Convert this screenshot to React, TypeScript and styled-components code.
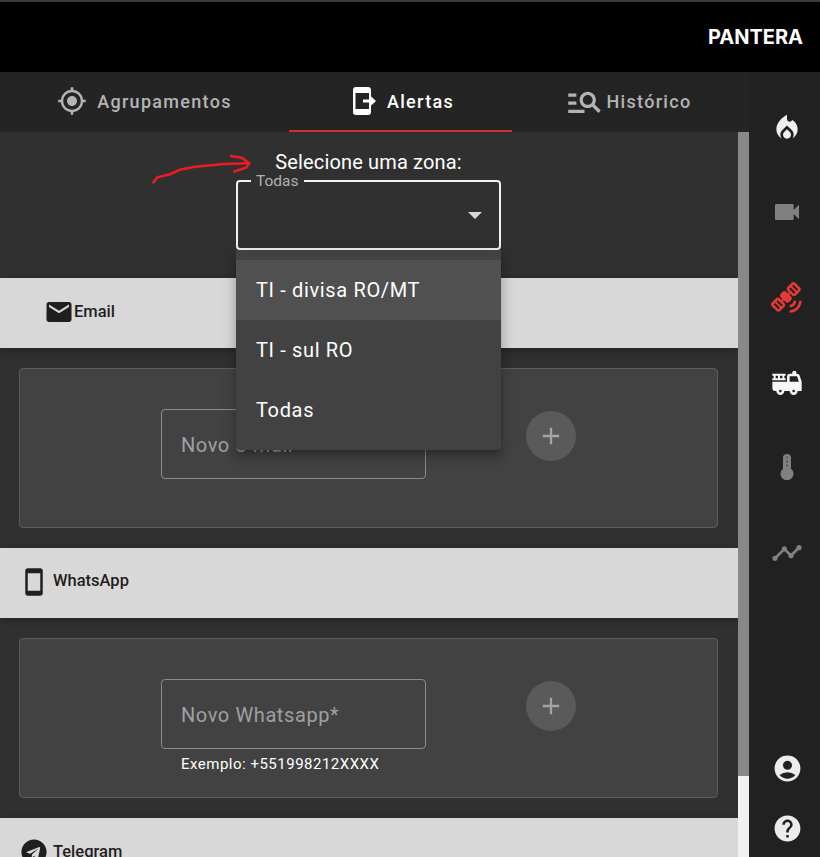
import React from 'react';
import styled, { createGlobalStyle } from 'styled-components';
import {
  MdAccountCircle,
  MdAdd,
  MdEmail,
  MdFireTruck,
  MdGpsFixed,
  MdHelp,
  MdLocalFireDepartment,
  MdManageSearch,
  MdSatelliteAlt,
  MdSmartphone,
  MdTimeline,
  MdVideocam,
} from 'react-icons/md';
import { FaTelegram } from 'react-icons/fa';

const GlobalStyle = createGlobalStyle`
  html, body {
    margin: 0;
    height: 100%;
    overflow: hidden;
    background: #303030;
    font-family: Roboto, "Liberation Sans", sans-serif;
  }
`;

const Page = styled.div`
  width: 820px;
  height: 857px;
  display: flex;
  flex-direction: column;
  overflow: hidden;
`;

const Header = styled.header`
  flex: 0 0 72px;
  box-sizing: border-box;
  background: #000;
  border-top: 2px solid #3c3c3c;
  display: flex;
  align-items: center;
  justify-content: flex-end;
  padding: 0 17px 0 0;
`;

const Logo = styled.div`
  color: #fff;
  font-family: Inter, sans-serif;
  font-weight: 700;
  font-size: 20px;
`;

const Body = styled.div`
  flex: 1;
  min-height: 0;
  display: flex;
`;

const Main = styled.div`
  width: 749px;
  display: flex;
  flex-direction: column;
`;

const Tabs = styled.nav`
  flex: 0 0 60px;
  display: flex;
  background: #242424;
`;

const Tab = styled.div<{ $width: number; $active?: boolean; $gap: number; $shift?: number }>`
  box-sizing: border-box;
  width: ${({ $width }) => $width}px;
  display: flex;
  align-items: center;
  justify-content: center;
  gap: ${({ $gap }) => $gap}px;
  padding-left: ${({ $shift }) => Math.max($shift ?? 0, 0)}px;
  padding-right: ${({ $shift }) => Math.max(-($shift ?? 0), 0)}px;
  font-size: 18px;
  font-weight: 500;
  letter-spacing: 1.3px;
  color: ${({ $active }) => ($active ? '#fff' : '#b4b4b4')};
  border-bottom: 2px solid ${({ $active }) => ($active ? '#d32f2f' : 'transparent')};
`;

const ScrollArea = styled.div`
  flex: 1;
  min-height: 0;
  display: flex;
`;

const Content = styled.main`
  position: relative;
  width: 738px;
  overflow: hidden;
  background: #303030;
`;

const ZoneSection = styled.section`
  box-sizing: border-box;
  height: 146px;
  display: flex;
  flex-direction: column;
  align-items: center;
  padding-right: 1px;
`;

const ZoneTitle = styled.div`
  margin-top: 18px;
  height: 24px;
  line-height: 24px;
  font-size: 20px;
  letter-spacing: 0.15px;
  color: #fff;
`;

const SelectBox = styled.fieldset`
  box-sizing: border-box;
  width: 265px;
  height: 76px;
  margin: 0;
  padding: 0 13px;
  border: 2px solid #f0f0f0;
  border-radius: 4px;
  position: relative;
`;

const SelectLegend = styled.legend`
  padding: 0 5px;
  font-size: 15.5px;
  line-height: 14px;
  color: #b0b0b0;
`;

const Caret = styled.span`
  position: absolute;
  right: 17px;
  top: 24px;
  width: 0;
  height: 0;
  border-left: 7px solid transparent;
  border-right: 7px solid transparent;
  border-top: 7px solid #d8d8d8;
`;

const Menu = styled.ul`
  position: absolute;
  top: 118px;
  left: 236px;
  z-index: 5;
  width: 265px;
  margin: 0;
  padding: 10px 0;
  list-style: none;
  background: #424242;
  border-radius: 0 0 4px 4px;
  box-shadow: 0 5px 5px -3px rgba(0, 0, 0, 0.2), 0 8px 10px 1px rgba(0, 0, 0, 0.14),
    0 3px 14px 2px rgba(0, 0, 0, 0.12);
`;

const MenuItem = styled.li<{ $hover?: boolean }>`
  height: 60px;
  display: flex;
  align-items: center;
  padding-left: 20px;
  font-size: 20px;
  letter-spacing: 0.65px;
  color: #fff;
  background: ${({ $hover }) => ($hover ? '#505050' : 'transparent')};
`;

const Arrow = styled.svg`
  position: absolute;
  left: 148px;
  top: 20px;
  width: 104px;
  height: 36px;
`;

const Bar = styled.div<{ $indent: number; $gap: number }>`
  position: relative;
  box-sizing: border-box;
  height: 70px;
  display: flex;
  align-items: center;
  gap: ${({ $gap }) => $gap}px;
  padding: 0 0 2px ${({ $indent }) => $indent}px;
  background: #d8d8d8;
  color: #1f1f1f;
  font-size: 16.5px;
  font-weight: 500;
  box-shadow: 0 2px 8px rgba(0, 0, 0, 0.3);
`;

const BarLabel = styled.span<{ $lift?: number }>`
  padding-bottom: ${({ $lift }) => $lift ?? 0}px;
`;

const PeekBar = styled(Bar)`
  align-items: flex-start;
  padding-top: 21px;
  height: 60px;
`;

const PeekLabel = styled.span`
  margin-top: 3px;
`;

const CardSection = styled.section`
  height: 200px;
  box-sizing: border-box;
  padding: 20px 20px 20px 19px;
`;

const Card = styled.div`
  box-sizing: border-box;
  height: 160px;
  padding-top: 40px;
  display: flex;
  justify-content: center;
  align-items: flex-start;
  gap: 100px;
  background: #424242;
  border: 1px solid #5c5c5c;
  border-radius: 4px;
`;

const Field = styled.div`
  width: 265px;
`;

const InputBox = styled.div`
  box-sizing: border-box;
  height: 70px;
  padding: 2px 19px 0;
  display: flex;
  align-items: center;
  border: 1px solid #8c8c8c;
  border-radius: 4px;
  font-size: 20px;
  letter-spacing: 0.6px;
  color: #a0a0a0;
`;

const Helper = styled.div`
  margin: 6px 0 0 20px;
  font-size: 15px;
  letter-spacing: 0.5px;
  color: #fff;
`;

const AddButton = styled.div`
  width: 50px;
  height: 50px;
  margin-top: 2px;
  border-radius: 50%;
  background: #5a5a5a;
  color: #a4a4a4;
  display: flex;
  align-items: center;
  justify-content: center;
`;

const Track = styled.div`
  width: 11px;
  background: #f1f1f1;
`;

const Thumb = styled.div`
  height: 644px;
  background: #888;
`;

const Sidebar = styled.aside`
  width: 71px;
  box-sizing: border-box;
  padding: 13px 0 0 5px;
  background: #212121;
  display: flex;
  flex-direction: column;
  align-items: center;
`;

const SideIcon = styled.div<{ $color: string; $height?: number; $lift?: number }>`
  box-sizing: border-box;
  height: ${({ $height }) => $height ?? 85}px;
  padding-bottom: ${({ $lift }) => $lift ?? 0}px;
  display: flex;
  align-items: center;
  justify-content: center;
  color: ${({ $color }) => $color};
`;

const SideBottom = styled.div`
  margin-top: auto;
  margin-bottom: -1px;
  display: flex;
  flex-direction: column;
`;

const AlertIcon = () => (
  <svg width="28" height="30" viewBox="0 0 28 30">
    <rect x="3" y="1" width="18" height="28" rx="3" fill="#fff" />
    <rect x="5.500" y="7" width="13.500" height="16" fill="#242424" />
    <rect x="13" y="13.500" width="9" height="3" fill="#fff" />
    <path d="M20 9.500l6 5.500-6 5.500z" fill="#fff" />
  </svg>
);

const ThermoIcon = () => (
  <svg width="30" height="30" viewBox="0 0 30 30">
    <path d="M11 5a4 4 0 0 1 8 0v10.700a6.500 6.500 0 1 1-8 0z" fill="#808080" />
    <path d="M15 3.500v2M15 7.500v2M15 11.500v2" stroke="#3a3a3a" strokeWidth="1.200" />
  </svg>
);

const ArrowMark = () => (
  <Arrow viewBox="0 0 104 36">
    <path
      d="M4.700 31.300L9.300 25.300L22 22.300L32 17.700L45.300 15L75.300 12L100.300 11.300"
      fill="none"
      stroke="#ed1c24"
      strokeWidth="2.600"
    />
    <path
      d="M82 4L93.700 5.700L101.300 11.300L98 15.700L85.300 19.700"
      fill="none"
      stroke="#ed1c24"
      strokeWidth="2.600"
    />
  </Arrow>
);

export default function App() {
  return (
    <Page>
      <GlobalStyle />
      <Header>
        <Logo>PANTERA</Logo>
      </Header>
      <Body>
        <Main>
          <Tabs>
            <Tab $width={289} $gap={10}>
              <MdGpsFixed size={30} />
              Agrupamentos
            </Tab>
            <Tab $width={223} $gap={9} $shift={3} $active>
              <AlertIcon />
              Alertas
            </Tab>
            <Tab $width={237} $gap={3} $shift={-5}>
              <MdManageSearch size={39} />
              Histórico
            </Tab>
          </Tabs>
          <ScrollArea>
            <Content>
              <ArrowMark />
              <ZoneSection>
                <ZoneTitle>Selecione uma zona:</ZoneTitle>
                <SelectBox>
                  <SelectLegend>Todas</SelectLegend>
                  <Caret />
                </SelectBox>
              </ZoneSection>
              <Menu>
                <MenuItem $hover>TI - divisa RO/MT</MenuItem>
                <MenuItem>TI - sul RO</MenuItem>
                <MenuItem>Todas</MenuItem>
              </Menu>
              <Bar $indent={44} $gap={0}>
                <MdEmail size={30} />
                <BarLabel $lift={1}>Email</BarLabel>
              </Bar>
              <CardSection>
                <Card>
                  <Field>
                    <InputBox>Novo e-mail</InputBox>
                  </Field>
                  <AddButton>
                    <MdAdd size={28} />
                  </AddButton>
                </Card>
              </CardSection>
              <Bar $indent={19} $gap={4}>
                <MdSmartphone size={30} />
                <BarLabel $lift={3}>WhatsApp</BarLabel>
              </Bar>
              <CardSection>
                <Card>
                  <Field>
                    <InputBox>Novo Whatsapp*</InputBox>
                    <Helper>Exemplo: +551998212XXXX</Helper>
                  </Field>
                  <AddButton>
                    <MdAdd size={28} />
                  </AddButton>
                </Card>
              </CardSection>
              <PeekBar $indent={21} $gap={6}>
                <FaTelegram size={26} />
                <PeekLabel>Telegram</PeekLabel>
              </PeekBar>
            </Content>
            <Track>
              <Thumb />
            </Track>
          </ScrollArea>
        </Main>
        <Sidebar>
          <SideIcon $color="#f0f0f0">
            <MdLocalFireDepartment size={32} />
          </SideIcon>
          <SideIcon $color="#808080" $lift={2}>
            <MdVideocam size={32} />
          </SideIcon>
          <SideIcon $color="#e53935">
            <MdSatelliteAlt size={32} />
          </SideIcon>
          <SideIcon $color="#f5f5f5">
            <MdFireTruck size={32} />
          </SideIcon>
          <SideIcon $color="#808080">
            <ThermoIcon />
          </SideIcon>
          <SideIcon $color="#808080">
            <MdTimeline size={32} />
          </SideIcon>
          <SideBottom>
            <SideIcon $color="#ececec" $height={61}>
              <MdAccountCircle size={31} />
            </SideIcon>
            <SideIcon $color="#ececec" $height={59}>
              <MdHelp size={31} />
            </SideIcon>
          </SideBottom>
        </Sidebar>
      </Body>
    </Page>
  );
}
